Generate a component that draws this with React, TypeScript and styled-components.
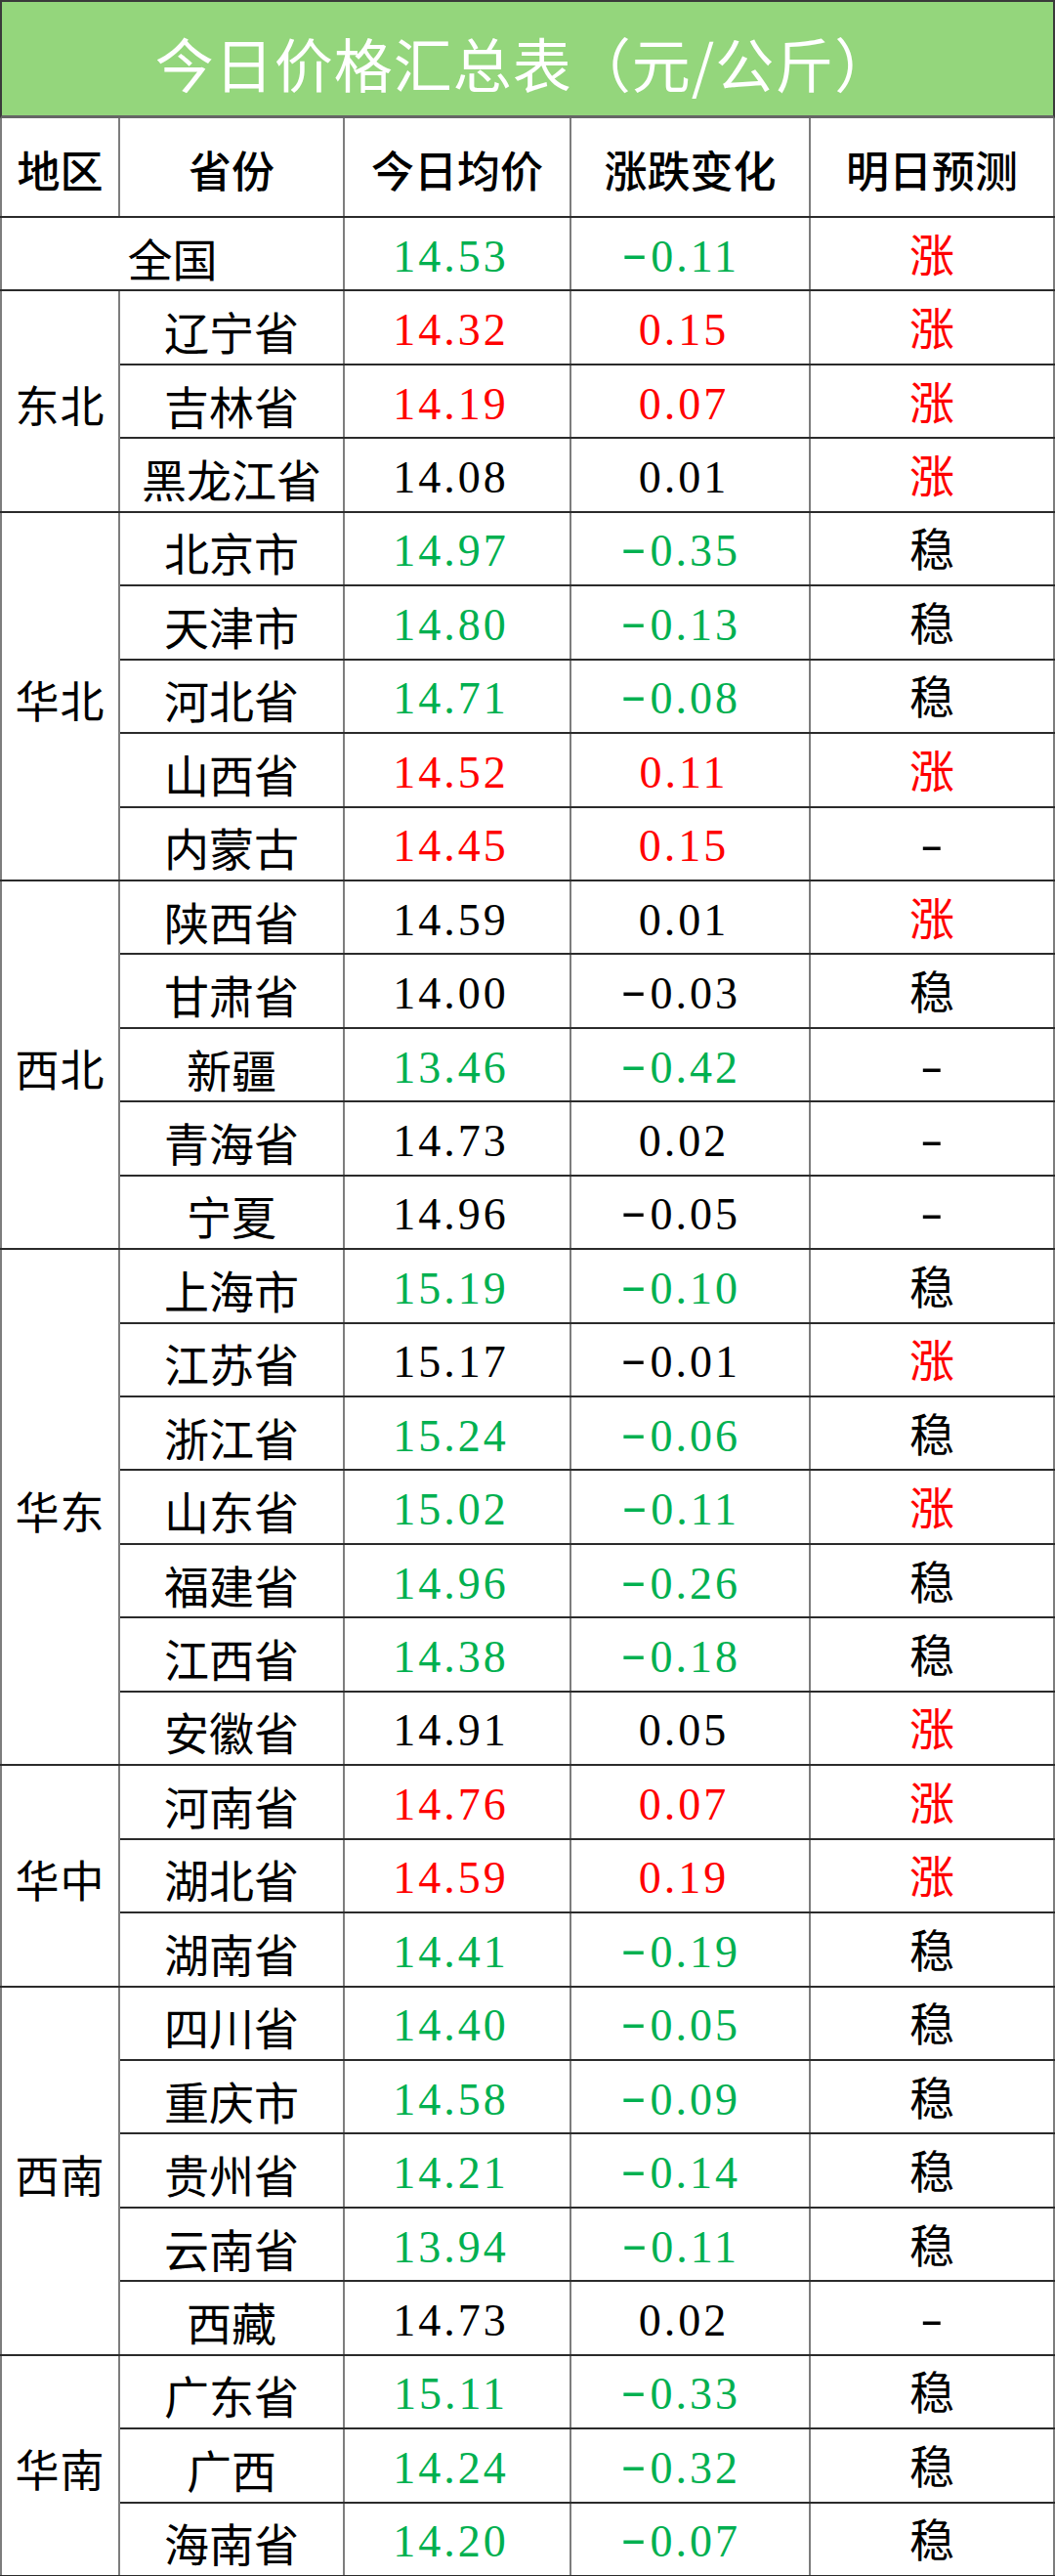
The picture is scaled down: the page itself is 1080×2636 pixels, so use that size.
import React from "react";
import styled, { createGlobalStyle } from "styled-components";

const GlobalStyle = createGlobalStyle`
  html, body {
    margin: 0;
    padding: 0;
    background: #ffffff;
  }
  body {
    font-family: "Noto Sans CJK SC", "Noto Sans", sans-serif;
  }
`;

const Colors = {
  green: "#00b050",
  red: "#ff0000",
  black: "#000000",
  title: "#94d67c",
  hLine: "#2b2b2b",
  vLine: "#7d7d7d",
};

type Tone = "g" | "r" | "b";

const toneColor = (t: Tone) =>
  t === "g" ? Colors.green : t === "r" ? Colors.red : Colors.black;

const Page = styled.div`
  width: 1080px;
  display: flex;
  flex-direction: column;
`;

const TitleBar = styled.div`
  height: 121px;
  box-sizing: border-box;
  background-color: ${Colors.title};
  border: 2px solid #3a3a3a;
  border-bottom: 3px solid #666666;
  display: flex;
  align-items: center;
  justify-content: center;
  padding: 6px 6px 0 0;
  color: #ffffff;
  font-size: 60px;
  letter-spacing: 1px;
  font-family: "Noto Sans CJK SC", sans-serif;
`;

const Table = styled.table`
  width: 1080px;
  border-collapse: collapse;
  table-layout: fixed;
  border-left: 2px solid #000;
  border-right: 2px solid #111;
  border-bottom: 2px solid #000;
`;

const HeadCell = styled.th<{ $w?: number }>`
  width: ${(p) => (p.$w ? `${p.$w}px` : "auto")};
  height: 101px;
  padding: 4px 0 0;
  box-sizing: border-box;
  font-weight: 500;
  font-size: 44px;
  color: #000;
  text-align: center;
  vertical-align: middle;
  border-left: 2px solid ${Colors.vLine};
  border-right: 2px solid ${Colors.vLine};
  border-bottom: 2px solid ${Colors.hLine};
  font-family: "Noto Sans CJK SC", sans-serif;
  white-space: nowrap;
`;

const Cell = styled.td<{ $tone?: Tone; $num?: boolean }>`
  height: 75.44px;
  box-sizing: border-box;
  padding: 6px ${(p) => (p.$num ? "13px" : "0")} 0 0;
  text-align: center;
  vertical-align: middle;
  color: ${(p) => toneColor(p.$tone ?? "b")};
  font-size: 46px;
  line-height: 1;
  white-space: nowrap;
  border-left: 2px solid ${Colors.vLine};
  border-right: 2px solid ${Colors.vLine};
  border-top: 2px solid ${Colors.hLine};
  border-bottom: 2px solid ${Colors.hLine};
  font-family: ${(p) =>
    p.$num
      ? `"Liberation Serif", "DejaVu Serif", serif`
      : `"Noto Sans CJK SC", sans-serif`};
  letter-spacing: ${(p) => (p.$num ? "3px" : "0")};
`;

const RegionCell = styled(Cell)`
  font-size: 45px;
  letter-spacing: 1px;
`;

const ForecastCell = styled(Cell)<{ $kind: string }>`
  color: ${(p) => (p.$kind === "涨" ? Colors.red : Colors.black)};
  font-family: "Liberation Serif", "Noto Sans CJK SC", serif;
`;

// the source sheet draws its minus wide, like a full dash, at mid height
const Minus = styled.span`
  display: inline-block;
  transform: translateY(-4px) scaleX(1.7);
  margin-right: 5px;
`;

const Dash = styled.span`
  display: inline-block;
  transform: translateY(-2px) scaleX(1.5);
  font-family: "Liberation Serif", serif;
`;

function Amount({ value }: { value: string }) {
  if (value.startsWith("-")) {
    return (
      <>
        <Minus>-</Minus>
        {value.slice(1)}
      </>
    );
  }
  return <>{value}</>;
}

type Row = [string, string, string, Tone, string];

const groups: { region: string; rows: Row[] }[] = [
  {
    region: "东北",
    rows: [
      ["辽宁省", "14.32", "0.15", "r", "涨"],
      ["吉林省", "14.19", "0.07", "r", "涨"],
      ["黑龙江省", "14.08", "0.01", "b", "涨"],
    ],
  },
  {
    region: "华北",
    rows: [
      ["北京市", "14.97", "-0.35", "g", "稳"],
      ["天津市", "14.80", "-0.13", "g", "稳"],
      ["河北省", "14.71", "-0.08", "g", "稳"],
      ["山西省", "14.52", "0.11", "r", "涨"],
      ["内蒙古", "14.45", "0.15", "r", "-"],
    ],
  },
  {
    region: "西北",
    rows: [
      ["陕西省", "14.59", "0.01", "b", "涨"],
      ["甘肃省", "14.00", "-0.03", "b", "稳"],
      ["新疆", "13.46", "-0.42", "g", "-"],
      ["青海省", "14.73", "0.02", "b", "-"],
      ["宁夏", "14.96", "-0.05", "b", "-"],
    ],
  },
  {
    region: "华东",
    rows: [
      ["上海市", "15.19", "-0.10", "g", "稳"],
      ["江苏省", "15.17", "-0.01", "b", "涨"],
      ["浙江省", "15.24", "-0.06", "g", "稳"],
      ["山东省", "15.02", "-0.11", "g", "涨"],
      ["福建省", "14.96", "-0.26", "g", "稳"],
      ["江西省", "14.38", "-0.18", "g", "稳"],
      ["安徽省", "14.91", "0.05", "b", "涨"],
    ],
  },
  {
    region: "华中",
    rows: [
      ["河南省", "14.76", "0.07", "r", "涨"],
      ["湖北省", "14.59", "0.19", "r", "涨"],
      ["湖南省", "14.41", "-0.19", "g", "稳"],
    ],
  },
  {
    region: "西南",
    rows: [
      ["四川省", "14.40", "-0.05", "g", "稳"],
      ["重庆市", "14.58", "-0.09", "g", "稳"],
      ["贵州省", "14.21", "-0.14", "g", "稳"],
      ["云南省", "13.94", "-0.11", "g", "稳"],
      ["西藏", "14.73", "0.02", "b", "-"],
    ],
  },
  {
    region: "华南",
    rows: [
      ["广东省", "15.11", "-0.33", "g", "稳"],
      ["广西", "14.24", "-0.32", "g", "稳"],
      ["海南省", "14.20", "-0.07", "g", "稳"],
    ],
  },
];

function Forecast({ kind }: { kind: string }) {
  return (
    <ForecastCell $kind={kind}>
      {kind === "-" ? <Dash>-</Dash> : kind}
    </ForecastCell>
  );
}

function App() {
  return (
    <Page>
      <GlobalStyle />
      <TitleBar>今日价格汇总表（元/公斤）</TitleBar>
      <Table>
        <thead>
          <tr>
            <HeadCell $w={121}>地区</HeadCell>
            <HeadCell $w={230}>省份</HeadCell>
            <HeadCell $w={232}>今日均价</HeadCell>
            <HeadCell $w={245}>涨跌变化</HeadCell>
            <HeadCell>明日预测</HeadCell>
          </tr>
        </thead>
        <tbody>
          <tr>
            <Cell colSpan={2}>全国</Cell>
            <Cell $num $tone="g">14.53</Cell>
            <Cell $num $tone="g">
              <Amount value="-0.11" />
            </Cell>
            <Forecast kind="涨" />
          </tr>
          {groups.map((g) =>
            g.rows.map((r, i) => (
              <tr key={g.region + r[0]}>
                {i === 0 && (
                  <RegionCell rowSpan={g.rows.length}>{g.region}</RegionCell>
                )}
                <Cell>{r[0]}</Cell>
                <Cell $num $tone={r[3]}>
                  {r[1]}
                </Cell>
                <Cell $num $tone={r[3]}>
                  <Amount value={r[2]} />
                </Cell>
                <Forecast kind={r[4]} />
              </tr>
            ))
          )}
        </tbody>
      </Table>
    </Page>
  );
}

export default App;
